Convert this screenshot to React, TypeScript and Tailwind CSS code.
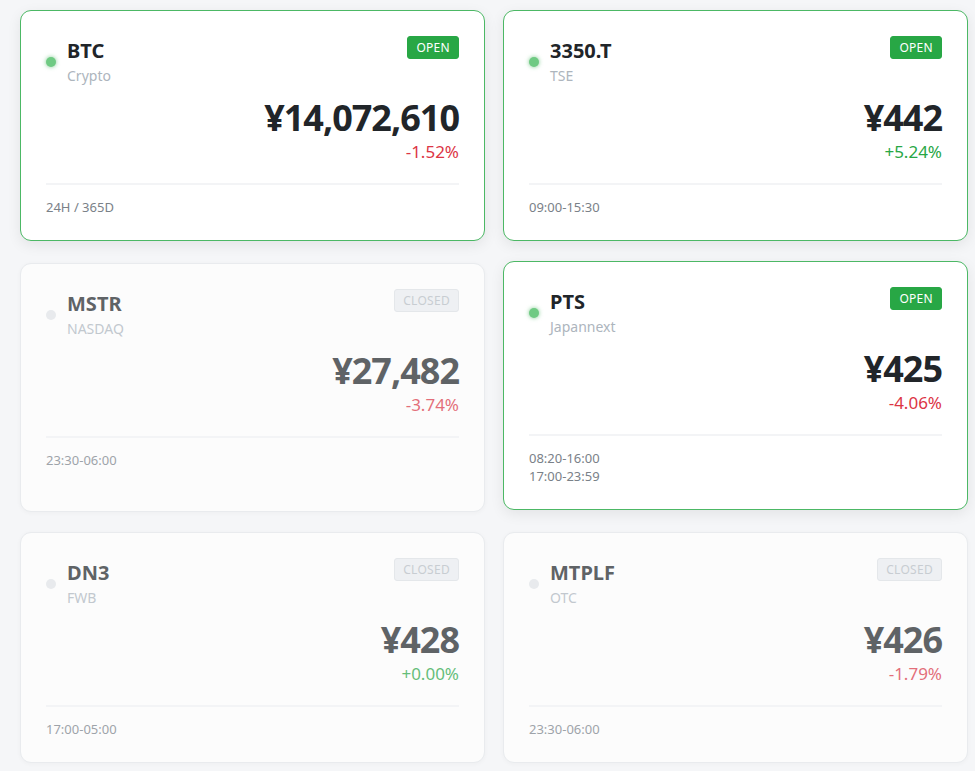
import clsx from 'clsx'

interface Market {
  symbol: string
  exchange: string
  price: string
  change: string
  up: boolean
  open: boolean
  hours: string[]
}

const markets: Market[] = [
  { symbol: 'BTC', exchange: 'Crypto', price: '¥14,072,610', change: '-1.52%', up: false, open: true, hours: ['24H / 365D'] },
  { symbol: '3350.T', exchange: 'TSE', price: '¥442', change: '+5.24%', up: true, open: true, hours: ['09:00-15:30'] },
  { symbol: 'MSTR', exchange: 'NASDAQ', price: '¥27,482', change: '-3.74%', up: false, open: false, hours: ['23:30-06:00'] },
  { symbol: 'PTS', exchange: 'Japannext', price: '¥425', change: '-4.06%', up: false, open: true, hours: ['08:20-16:00', '17:00-23:59'] },
  { symbol: 'DN3', exchange: 'FWB', price: '¥428', change: '+0.00%', up: true, open: false, hours: ['17:00-05:00'] },
  { symbol: 'MTPLF', exchange: 'OTC', price: '¥426', change: '-1.79%', up: false, open: false, hours: ['23:30-06:00'] },
]

function MarketCard({ m }: { m: Market }) {
  return (
    <div
      className={clsx(
        'flex flex-col rounded-[11px] border bg-white px-[25px] pt-[25px] pb-[24px]',
        m.open
          ? 'border-[#4cb865] -translate-y-[2px] shadow-[0_4px_14px_rgba(0,0,0,0.08)]'
          : 'border-[#e4e7ea] opacity-70 shadow-[0_1px_4px_rgba(0,0,0,0.04)]'
      )}
    >
      <div className="flex items-start justify-between">
        <div className="flex items-center gap-[11px]">
          <span
            className={clsx(
              'mt-[2px] h-[10px] w-[10px] rounded-full',
              m.open ? 'bg-[#6fca83] shadow-[0_0_4px_rgba(40,167,69,0.6)]' : 'bg-[#e3e6e9]'
            )}
          />
          <div className="flex flex-col pt-[2px]">
            <span className="text-[20px] font-bold leading-[26px] text-[#212529]">{m.symbol}</span>
            <span className="mt-[2px] text-[14px] leading-[20px] text-[#adb5bd]">{m.exchange}</span>
          </div>
        </div>
        <span
          className={clsx(
            'flex h-[23px] items-center rounded-[3px] border px-[8px] text-[12px] tracking-[0.3px]',
            m.open ? 'border-[#28a745] bg-[#28a745] text-white' : 'border-[#dde1e5] bg-[#eceef1] text-[#b5bcc3]'
          )}
        >
          {m.open ? 'OPEN' : 'CLOSED'}
        </span>
      </div>

      <div className="mt-[9px] flex flex-col items-end">
        <span className="text-[36px] font-bold leading-[45px] tracking-[-1px] text-[#212529]">{m.price}</span>
        <span className={clsx('text-[17px] leading-[24px]', m.up ? 'text-[#28a745]' : 'text-[#dc3545]')}>
          {m.change}
        </span>
      </div>

      <div className="mt-[19px] border-t-2 border-[#f3f4f6] pt-[13px] text-[13px] leading-[18px] text-[#7a8188]">
        {m.hours.map((h) => (
          <div key={h}>{h}</div>
        ))}
      </div>
    </div>
  )
}

export default function App() {
  return (
    <div
      className="min-h-[771px] bg-[#f5f6f8] pt-[12px] pl-[20px]"
      style={{ fontFamily: '"Noto Sans", "Open Sans", sans-serif' }}
    >
      <div className="grid grid-cols-[465px_465px] gap-x-[18px] gap-y-[20px]">
        {markets.map((m) => (
          <MarketCard key={m.symbol} m={m} />
        ))}
      </div>
    </div>
  )
}
